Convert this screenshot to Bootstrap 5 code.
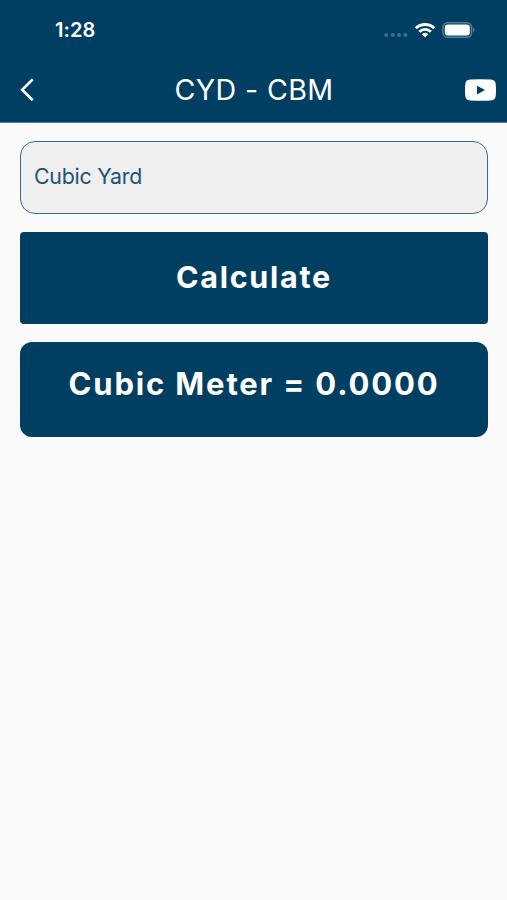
<!DOCTYPE html>
<html lang="en">
<head>
<meta charset="utf-8">
<meta name="viewport" content="width=device-width, initial-scale=1">
<title>CYD - CBM</title>
<link href="https://cdn.jsdelivr.net/npm/bootstrap@5.3.0/dist/css/bootstrap.min.css" rel="stylesheet">
<style>
:root { --navy: #003f62; }
body { background: #fafafa; font-family: Inter, "Liberation Sans", sans-serif; min-height: 100vh; }
.app-header { background: var(--navy); height: 123px; border-bottom: 1px solid #56809a; }
.status-bar { height: 60px; padding: 0 32px 0 55px; }
.clock { font-size: 20px; font-weight: 600; line-height: 24px; letter-spacing: .1px; }
.title-bar { height: 60px; padding: 0 11px 0 20px; }
.title-side { width: 38px; }
.app-title { font-size: 28.6px; font-weight: 400; line-height: 36px; letter-spacing: .4px; }
.app-main { padding: 18px 19px 0 20px; gap: 18px; }
.unit-input { height: 73px; padding: 0 14px 4px 13px; font-size: 21.3px; letter-spacing: -.2px; color: #1c5276; background: #efefef; border: 1.5px solid #3c6c8c; border-radius: 15px; }
.unit-input::placeholder { color: #1c5276; opacity: 1; }
.unit-input:focus { background: #efefef; }
.btn-calc { --bs-btn-bg: var(--navy); --bs-btn-color: #fff; --bs-btn-hover-bg: #00507c; --bs-btn-hover-color: #fff; height: 91.5px; padding-bottom: 7px; border: 0; border-radius: 4px; font-size: 30.500px; font-weight: 700; letter-spacing: 1.7px; }
.result-box { background: var(--navy); height: 95px; border-radius: 12px; padding-top: 23.500px; font-size: 31px; font-weight: 700; line-height: 38px; letter-spacing: 1.85px; }
</style>
</head>
<body>
<header class="app-header text-white">
  <div class="status-bar d-flex align-items-center justify-content-between">
    <span class="clock">1:28</span>
    <div class="d-flex align-items-center">
      <svg width="92" height="22" viewBox="0 0 92 22" fill="none" aria-hidden="true">
        <g fill="#3f6f8c"><circle cx="3.3" cy="16" r="2"/><circle cx="9.7" cy="16" r="2"/><circle cx="16.1" cy="16" r="2"/><circle cx="22.4" cy="16" r="2"/></g>
        <g stroke="#fff" stroke-width="2.9"><path d="M32.9 9.2a13.3 13.3 0 0 1 18.4 0"/><path d="M36.3 12.7a8.4 8.4 0 0 1 11.6 0"/></g>
        <path fill="#fff" d="M38.9 15.3a4.7 4.7 0 0 1 6.4 0l-3.2 3.1z"/>
        <rect x="60" y="3.7" width="28.5" height="14.6" rx="4.6" stroke="#587f99" stroke-width="1.5"/>
        <rect x="61.8" y="5.5" width="25" height="11" rx="3" fill="#fff"/>
        <path fill="#587f99" d="M90 8.8c2.2.7 2.2 3.7 0 4.4z"/>
      </svg>
    </div>
  </div>
  <div class="title-bar d-flex align-items-center justify-content-between">
    <div class="title-side d-flex">
      <svg width="16" height="26" viewBox="0 0 16 26" fill="none" stroke="#fff" stroke-width="2.7" aria-label="Back"><path d="M12.7 2.4 2.200 12.800l10.500 10.400"/></svg>
    </div>
    <h1 class="app-title m-0">CYD - CBM</h1>
    <div class="title-side d-flex justify-content-end ms-2">
      <svg width="31" height="22" viewBox="0 0 31 22" aria-label="Video"><path fill="#fff" fill-rule="evenodd" d="M5 .6Q15.5-.2 26 .6q4.3.3 4.7 4.4.6 6 0 12-.4 4.100-4.700 4.400-10.500.8-21 0Q.7 21.100.3 17q-.6-6 0-12Q.7.9 5 .6zM12 6.700v8.800l8-4.400z"/></svg>
    </div>
  </div>
</header>
<main class="app-main d-flex flex-column">
  <input class="form-control unit-input shadow-none" type="text" inputmode="decimal" placeholder="Cubic Yard" aria-label="Cubic Yard">
  <button class="btn btn-calc w-100" type="button">Calculate</button>
  <div class="result-box text-white text-center text-nowrap">Cubic Meter = 0.0000</div>
</main>
<script src="https://cdn.jsdelivr.net/npm/bootstrap@5.3.0/dist/js/bootstrap.bundle.min.js"></script>
</body>
</html>
